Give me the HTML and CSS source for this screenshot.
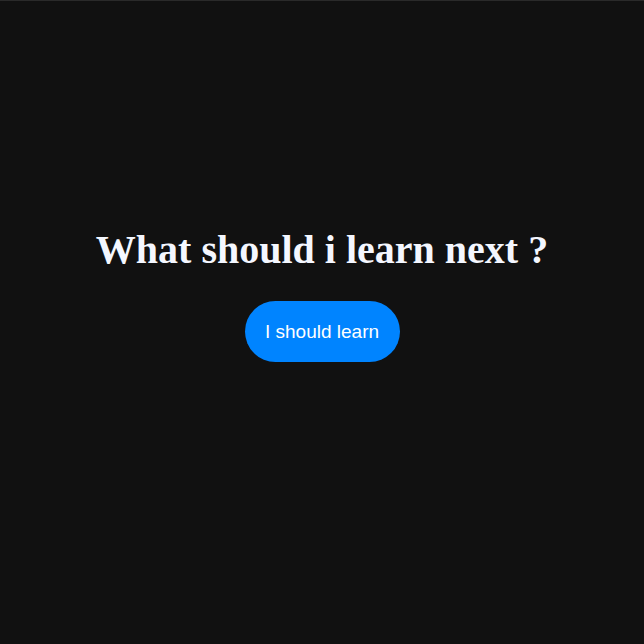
FILE: index.html
```html
<!DOCTYPE html>
<html>
<head>
<meta charset="utf-8">
<link rel="stylesheet" href="styles.css">
</head>
<body>
<main class="page">
  <h1 class="title">What should i learn next ?</h1>
  <button class="learn-btn">I should learn</button>
</main>
</body>
</html>
```
FILE: styles.css
```css
html, body {
  margin: 0;
  padding: 0;
  background: #111111;
}
.page {
  box-sizing: border-box;
  height: 644px;
  border-top: 1px solid #2a2a2a;
  padding-bottom: 56px;
  display: flex;
  flex-direction: column;
  align-items: center;
  justify-content: center;
  gap: 28px;
}
.title {
  margin: 0;
  font-family: "Liberation Serif", serif;
  font-weight: bold;
  font-size: 40px;
  line-height: 46px;
  color: #f4f7ff;
}
.learn-btn {
  font-family: "Liberation Sans", sans-serif;
  font-size: 19px;
  color: #ffffff;
  background: #0084ff;
  border: none;
  border-radius: 31px;
  width: 155px;
  height: 61px;
  padding: 0;
}
```
